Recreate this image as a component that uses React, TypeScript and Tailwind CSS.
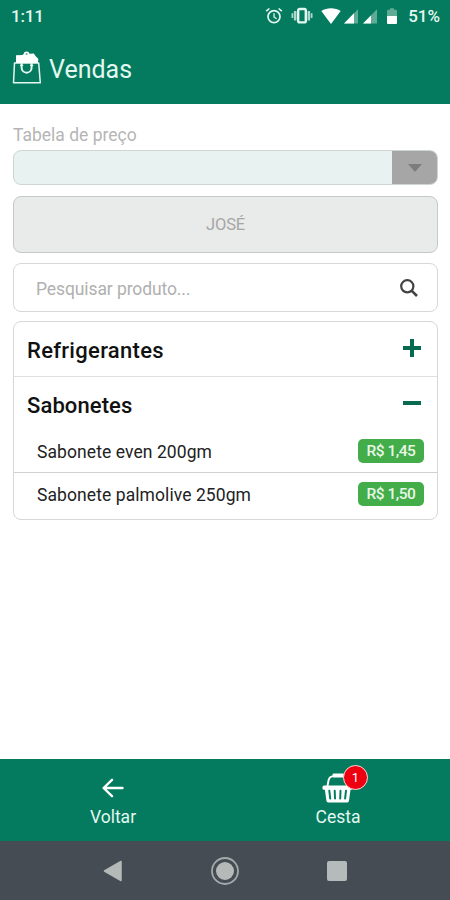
import React, { useState } from 'react';

interface Product {
  name: string;
  price: string;
}

interface Category {
  title: string;
  products: Product[];
}

const categories: Category[] = [
  { title: 'Refrigerantes', products: [] },
  {
    title: 'Sabonetes',
    products: [
      { name: 'Sabonete even 200gm', price: 'R$ 1,45' },
      { name: 'Sabonete palmolive 250gm', price: 'R$ 1,50' },
    ],
  },
];

const StatusBar: React.FC = () => (
  <div className="flex h-8 items-center justify-between pl-[11px] pr-[10px] text-[#e3f8f0]">
    <span className="text-[17px] font-medium leading-8 tracking-[-0.2px]">1:11</span>
    <div className="flex items-center">
      {/* Alarm */}
      <svg width="18" height="18" viewBox="0 0 18 18" fill="none" stroke="currentColor" className="mr-[8px]">
        <circle cx="9" cy="9.7" r="6" strokeWidth="1.7" />
        <path d="M9 6.2v3.8l2.6 1.7" strokeWidth="1.3" />
        <path d="M1.2 4.2 4.4 1.5M16.8 4.2l-3.2-2.7" strokeWidth="1.6" />
      </svg>
      {/* Vibrate */}
      <svg width="22" height="18" viewBox="0 0 22 18" fill="none" stroke="currentColor" className="mr-[8px]">
        <path d="M1.4 6.3v4.8M20.6 6.3v4.8" strokeWidth="1.8" opacity="0.75" />
        <path d="M4.2 4v9.6M17.8 4v9.6" strokeWidth="2.6" opacity="0.75" />
        <rect x="7.2" y="2" width="7.6" height="13.4" rx="1.5" strokeWidth="2.4" />
      </svg>
      {/* Wifi */}
      <svg width="20" height="18" viewBox="0 0 20 18" className="mr-[3px]">
        <path d="M0.3 4C5.8 0.3 14.2 0.3 19.7 4L10 17z" fill="#ffffff" />
      </svg>
      {/* Signal, one per SIM */}
      <svg width="14" height="18" viewBox="0 0 14 18" className="mr-[5px]">
        <path d="M0 16.5 14 2.3V16.5z" fill="#5fab96" />
        <path d="M0 16.5 10 6.2V16.5z" fill="#ffffff" />
      </svg>
      <svg width="14" height="18" viewBox="0 0 14 18" className="mr-[10px]">
        <path d="M0 16.5 14 2.3V16.5z" fill="#5fab96" />
        <path d="M0 16.5 8 8.4V16.5z" fill="#ffffff" />
      </svg>
      {/* Battery */}
      <svg width="10" height="18" viewBox="0 0 10 18" className="mr-[11px]">
        <path d="M3 1.2h4V2.7H9q1 0 1 1V9H0V3.7q0-1 1-1H3z" fill="#5fab96" />
        <path d="M0 9h10v7q0 1-1 1H1q-1 0-1-1z" fill="#ffffff" />
      </svg>
      <span className="text-[17px] font-medium leading-8">51%</span>
    </div>
  </div>
);

const BagIcon: React.FC = () => (
  <svg width="30" height="34" viewBox="0 0 30 34" fill="none" className="-mt-1">
    <path d="M2.5 12H26.7L28.3 31.8H1.5z" stroke="#e6f7f1" strokeWidth="1.5" strokeLinejoin="round" />
    <path d="M4 12V4.2L10.6 4 11.7 2.8Q12 0.5 14.5 0.5T17.5 2.8L21.8 2.6 23.5 5 26.4 8 25.8 12z" fill="#ffffff" />
    <circle cx="14.6" cy="3" r="1.1" fill="#047b5e" opacity="0.6" />
    <path d="M9.6 12V16.5a5 5.2 0 0 0 10 0V12" stroke="#e6f7f1" strokeWidth="2" />
    <path d="M8 14.3h3.2M18 14.3h3.2" stroke="#e6f7f1" strokeWidth="1.2" />
  </svg>
);

const BasketIcon: React.FC = () => (
  <svg width="32" height="32" viewBox="0 0 32 32" fill="none">
    <path d="M5.3 15 6.6 8Q7.5 4.4 11.5 4.1M21 4.1q3.5 0.3 4.4 3.7L26.6 15" stroke="#ffffff" strokeWidth="1.9" />
    <rect x="10.5" y="1.6" width="11.5" height="4" rx="1.2" fill="#ffffff" />
    <rect x="0.5" y="13.4" width="30" height="4.4" rx="1.5" fill="#ffffff" />
    <path d="M2.8 17H28.6L27 28.7Q26.8 30.4 25.2 30.4H6.2Q4.7 30.4 4.4 28.7z" fill="#ffffff" />
    <path d="M7.3 18.7 8.2 26.5M12.7 18.7 13 26.5M18.5 18.7 18.2 26.5M24 18.7 23.1 26.5" stroke="#047b5e" strokeWidth="2" strokeLinecap="round" />
  </svg>
);

const PriceTag: React.FC<{ price: string }> = ({ price }) => (
  <span className="flex h-6 w-[66px] items-center justify-center rounded-[5px] bg-[#42ad49] pt-px text-[15.5px] font-medium tracking-[-0.5px] text-[#e9f7e8]">
    {price}
  </span>
);

const App: React.FC = () => {
  const [search, setSearch] = useState('');
  const [openCategory, setOpenCategory] = useState<string | null>('Sabonetes');

  return (
    <div className="flex h-[900px] w-[450px] flex-col overflow-hidden bg-white font-['Roboto',sans-serif]">
      <header className="h-[104px] shrink-0 bg-[#047b5e]">
        <StatusBar />
        <div className="flex items-center gap-[7px] pl-3 pt-[18px]">
          <BagIcon />
          <h1 className="pt-px text-[25px] leading-[38px] text-[#e3f8f0]">Vendas</h1>
        </div>
      </header>

      <main className="flex flex-1 flex-col pl-[13px] pr-3 pt-5">
        <label className="h-[26px] text-[17.5px] leading-[22px] text-[#b5b5b5]">Tabela de preço</label>

        <div className="flex h-[35px] shrink-0 overflow-hidden rounded-lg border border-[#cfd5d4] bg-[#e8f2f1]">
          <div className="flex-1" />
          <div className="flex w-[45px] items-center justify-center bg-[#a5a6a5] pt-px">
            <svg width="14" height="8" viewBox="0 0 14 8">
              <path d="M0 0h14L7 8z" fill="#7d7d7d" />
            </svg>
          </div>
        </div>

        <button className="mt-[11px] h-[57px] shrink-0 rounded-lg border border-[#c6c8c7] bg-[#e9ebea] pt-px text-[16.5px] tracking-[-0.2px] text-[#a5a6a5]">
          JOSÉ
        </button>

        <div className="mt-[10px] flex h-[49px] shrink-0 items-center rounded-lg border border-[#d6d8d8] pl-[22px] pr-[19px]">
          <input
            value={search}
            onChange={(e) => setSearch(e.target.value)}
            placeholder="Pesquisar produto..."
            className="min-w-0 flex-1 pt-[3px] text-[17.5px] tracking-[-0.1px] text-[#333] outline-none placeholder:text-[#b0b0b0]"
          />
          <svg width="18" height="18" viewBox="0 0 18 18" fill="none" stroke="#424242">
            <circle cx="7.3" cy="7.3" r="6.1" strokeWidth="2.2" />
            <path d="m11.8 11.8 5.2 5.2" strokeWidth="2.6" />
          </svg>
        </div>

        <div className="mt-[9px] h-[199px] shrink-0 rounded-lg border border-[#d6d8d8]">
          {categories.map((category, index) => {
            const isOpen = openCategory === category.title;
            return (
              <div key={category.title} className={index > 0 ? 'border-t border-[#dfe1e1]' : ''}>
                <button
                  onClick={() => setOpenCategory(isOpen ? null : category.title)}
                  className={`flex w-full items-center justify-between pl-[13px] pr-4 text-[22px] font-medium text-[#111] ${
                    isOpen ? 'h-[53px] pt-px tracking-[0.1px]' : 'h-[54px] pb-px tracking-[0.3px]'
                  }`}
                >
                  <span className="pt-[3px]">{category.title}</span>
                  <svg width="18" height="18" viewBox="0 0 18 18" stroke="#086a50" strokeWidth="4" className="mb-[2px]">
                    <path d={isOpen ? 'M0 9h18' : 'M0 9h18M9 0v18'} />
                  </svg>
                </button>
                {isOpen &&
                  category.products.map((product, i) => (
                    <div
                      key={product.name}
                      className={`flex items-center justify-between pl-[23px] pr-[13px] ${
                        i > 0 ? 'h-[43px] border-t border-[#d0d2d2]' : 'h-[42px]'
                      }`}
                    >
                      <span className="pt-[2px] text-[17.5px] tracking-[0.08px] text-[#222]">{product.name}</span>
                      <PriceTag price={product.price} />
                    </div>
                  ))}
              </div>
            );
          })}
        </div>
      </main>

      <footer className="grid h-[82px] shrink-0 grid-cols-2 bg-[#047b5e] text-[17.5px] text-[#e3f8f0]">
        <button className="flex flex-col items-center pl-px pt-[19px]">
          <svg width="22" height="20" viewBox="0 0 22 20" fill="none" stroke="#ffffff" strokeWidth="2.4" strokeLinecap="round" strokeLinejoin="round">
            <path d="M20.5 10H2M10 1.8 1.6 10 10 18.2" />
          </svg>
          <span className="mt-[6px] leading-[26px]">Voltar</span>
        </button>
        <button className="flex flex-col items-center pl-px pt-[13px]">
          <span className="relative">
            <BasketIcon />
            <span className="absolute -top-[7px] left-[21px] flex h-[25px] w-[25px] items-center justify-center rounded-full border-[1.5px] border-[#ffd9d9] bg-[#ee0011] text-[13px] text-white">
              1
            </span>
          </span>
          <span className="leading-[26px]">Cesta</span>
        </button>
      </footer>

      {/* Android navigation */}
      <nav className="flex h-[59px] shrink-0 items-center justify-between bg-[#464c54] pl-[103px] pr-[103px]">
        <svg width="20" height="22" viewBox="0 0 20 22">
          <path d="M18 1.5V20.5L1.5 11z" fill="#b5bab9" stroke="#b5bab9" strokeWidth="1.5" strokeLinejoin="round" />
        </svg>
        <svg width="30" height="30" viewBox="0 0 30 30">
          <circle cx="15" cy="15" r="13" fill="none" stroke="#a4aaab" strokeWidth="1.8" />
          <circle cx="15" cy="15" r="9" fill="#b5bab9" />
        </svg>
        <span className="h-5 w-5 rounded-[2px] bg-[#b5babb]" />
      </nav>
    </div>
  );
};

export default App;
